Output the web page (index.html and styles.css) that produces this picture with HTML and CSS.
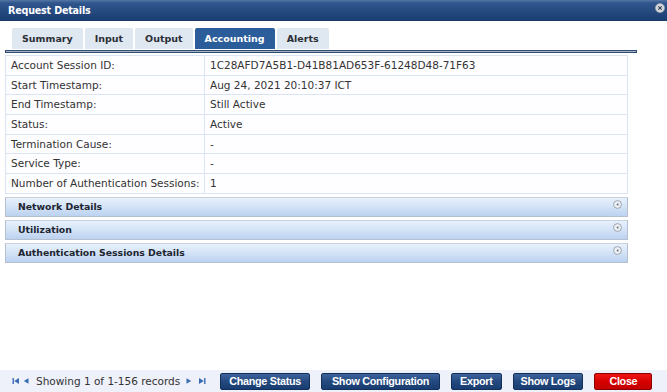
FILE: index.html
```html
<!DOCTYPE html>
<html>
<head>
<meta charset="utf-8">
<link rel="stylesheet" href="styles.css">
</head>
<body>
<div class="dialog">
  <div class="titlebar">
    <span class="title">Request Details</span>
    <span class="close-x">
      <svg width="10" height="10" viewBox="0 0 10 10"><circle cx="5" cy="5" r="4.6" fill="#d4d8de" stroke="#9aa3ae" stroke-width="0.6"/><path d="M3.3 3.3L6.7 6.7M6.7 3.3L3.3 6.7" stroke="#3b4350" stroke-width="1.2"/></svg>
    </span>
  </div>
  <div class="tabs">
    <div class="tab">Summary</div>
    <div class="tab">Input</div>
    <div class="tab">Output</div>
    <div class="tab active">Accounting</div>
    <div class="tab">Alerts</div>
  </div>
  <div class="tabline"></div>
  <div class="content">
    <table class="details">
      <tr><td class="lbl">Account Session ID:</td><td>1C28AFD7A5B1-D41B81AD653F-61248D48-71F63</td></tr>
      <tr><td class="lbl">Start Timestamp:</td><td>Aug 24, 2021 20:10:37 ICT</td></tr>
      <tr><td class="lbl">End Timestamp:</td><td>Still Active</td></tr>
      <tr><td class="lbl">Status:</td><td>Active</td></tr>
      <tr><td class="lbl">Termination Cause:</td><td>-</td></tr>
      <tr><td class="lbl">Service Type:</td><td>-</td></tr>
      <tr><td class="lbl">Number of Authentication Sessions:</td><td>1</td></tr>
    </table>
    <div class="section"><span>Network Details</span><svg class="sec-icon" width="9" height="9" viewBox="0 0 9 9"><circle cx="4.5" cy="4.5" r="3.9" fill="#eef2f7" stroke="#8a929c" stroke-width="0.8"/><path d="M5.4 2.9L3.2 4.5L5.4 6.1Z" fill="#6b737d"/></svg></div>
    <div class="section"><span>Utilization</span><svg class="sec-icon" width="9" height="9" viewBox="0 0 9 9"><circle cx="4.5" cy="4.5" r="3.9" fill="#eef2f7" stroke="#8a929c" stroke-width="0.8"/><path d="M5.4 2.9L3.2 4.5L5.4 6.1Z" fill="#6b737d"/></svg></div>
    <div class="section"><span>Authentication Sessions Details</span><svg class="sec-icon" width="9" height="9" viewBox="0 0 9 9"><circle cx="4.5" cy="4.5" r="3.9" fill="#eef2f7" stroke="#8a929c" stroke-width="0.8"/><path d="M5.4 2.9L3.2 4.5L5.4 6.1Z" fill="#6b737d"/></svg></div>
  </div>
  <div class="footer">
    <div class="pager">
      <svg class="pg-first" width="8" height="8" viewBox="0 0 8 8"><rect x="0.5" y="1" width="1.4" height="6" fill="#3a6cb4"/><path d="M7 1L2.2 4L7 7Z" fill="#3a6cb4"/></svg>
      <svg width="6" height="8" viewBox="0 0 6 8"><path d="M5.5 1.2L0.8 4L5.5 6.8Z" fill="#3a6cb4"/></svg>
      <span class="pager-text">Showing 1 of 1-156 records</span>
      <svg width="6" height="8" viewBox="0 0 6 8"><path d="M0.5 1.2L5.2 4L0.5 6.8Z" fill="#3a6cb4"/></svg>
      <svg class="pg-last" width="8" height="8" viewBox="0 0 8 8"><path d="M1 1L5.8 4L1 7Z" fill="#3a6cb4"/><rect x="6.1" y="1" width="1.4" height="6" fill="#3a6cb4"/></svg>
    </div>
    <div class="buttons">
      <button class="btn">Change Status</button>
      <button class="btn btn-wide">Show Configuration</button>
      <button class="btn">Export</button>
      <button class="btn btn-narrow">Show Logs</button>
      <button class="btn btn-close">Close</button>
    </div>
  </div>
</div>
</body>
</html>
```
FILE: styles.css
```css
html, body {
  margin: 0;
  padding: 0;
  background: #ffffff;
}
.dialog {
  width: 667px;
  height: 392px;
  display: flex;
  flex-direction: column;
  font-family: "DejaVu Sans", Verdana, sans-serif;
  font-size: 10.5px;
  color: #333333;
}
.titlebar {
  height: 21px;
  box-sizing: border-box;
  display: flex;
  align-items: center;
  justify-content: space-between;
  padding: 0 2px 1px 8px;
  background: linear-gradient(to bottom, #5577a6 0px, #2f568d 3px, #24497f 12px, #1b3e72 20px, #163766 21px);
}
.title {
  color: #ffffff;
  font-weight: bold;
  font-size: 9.6px;
  letter-spacing: -0.2px;
}
.close-x {
  display: flex;
  width: 10px;
  height: 10px;
  margin-bottom: 5px;
}
.tabs {
  display: flex;
  gap: 2px;
  margin: 7px 0 0 12px;
  height: 21px;
}
.tab {
  display: flex;
  align-items: center;
  padding: 0 10px;
  background: #dfe7f0;
  border-radius: 2px 2px 0 0;
  font-weight: bold;
  font-size: 9.5px;
  color: #2b2f36;
}
.tab.active {
  background: #2c5d9b;
  color: #ffffff;
}
.tabline {
  margin: 1px 0 0 5px;
  width: 632px;
  height: 3px;
  box-sizing: border-box;
  border: 1px solid #2f4c74;
  background: #a9b5c4;
}
.content {
  width: 623px;
  margin: 2px 0 0 5px;
}
.details {
  width: 100%;
  border-collapse: collapse;
  background: #fefdff;
}
.details td {
  border: 1px solid #dbe4f3;
  height: 19.7px;
  padding: 0 0 0 5px;
  box-sizing: border-box;
  white-space: nowrap;
  line-height: 17px;
}
.details td.lbl {
  width: 199px;
}
.section {
  margin-top: 3px;
  height: 20px;
  box-sizing: border-box;
  border: 1px solid #b4c0d0;
  border-top-color: #c9d1dc;
  background: linear-gradient(to bottom, #e8f1fc 0%, #d5e4f7 45%, #bcd2f0 100%);
  display: flex;
  align-items: center;
  justify-content: space-between;
  padding: 0 5px 0 12px;
  font-weight: bold;
  font-size: 9.3px;
  color: #202530;
}
.sec-icon {
  margin-bottom: 4px;
}
.footer {
  margin-top: auto;
  height: 22px;
  background: #eef0fa;
  display: flex;
  align-items: center;
  padding: 0 0 0 10px;
}
.pager {
  display: flex;
  align-items: center;
  gap: 3px;
}
.pg-first {
  margin-left: 2px;
}
.pager-text {
  margin: 0 3px 0 4px;
  color: #333333;
}
.pg-last {
  margin-left: 3px;
}
.buttons {
  display: flex;
  gap: 11px;
  margin-left: 14px;
}
.btn {
  height: 17px;
  padding: 0 8px;
  border: 1px solid #10305e;
  border-radius: 2px;
  background: linear-gradient(to bottom, #3d649b 0%, #23497f 50%, #1a3d70 100%);
  color: #ffffff;
  font-family: "Liberation Sans", Arial, sans-serif;
  font-weight: bold;
  font-size: 10.8px;
  letter-spacing: -0.3px;
  line-height: 15px;
}
.btn-wide {
  padding: 0 10px;
}
.btn-narrow {
  padding: 0 7px;
}
.btn-close {
  padding: 0 14px;
  border-color: #8a0000;
  background: linear-gradient(to bottom, #f01414 0%, #d60000 50%, #c20000 100%);
}
```
